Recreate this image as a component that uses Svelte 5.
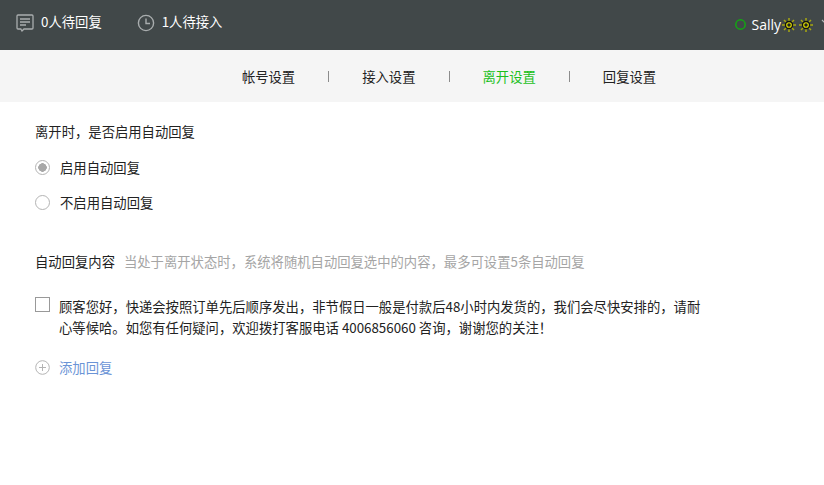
<script lang="ts">
  const tabs = ["帐号设置", "接入设置", "离开设置", "回复设置"];
  const active = "离开设置";
</script>

<div class="page">
  <header class="topbar">
    <div class="stat first">
      <svg width="18" height="18" viewBox="0 0 18 18" fill="none" stroke="#a9adae" stroke-width="1.3">
        <path d="M2 1h14a1 1 0 0 1 1 1v12a1 1 0 0 1-1 1H8l-2 2-1.200-2H2a1 1 0 0 1-1-1V2a1 1 0 0 1 1-1z" />
        <path d="M4 5h10M4 8h10M4 11h6" />
      </svg>
      <span>0人待回复</span>
    </div>
    <div class="stat">
      <svg width="18" height="18" viewBox="0 0 18 18" fill="none" stroke="#a9adae" stroke-width="1.4">
        <circle cx="9" cy="9" r="7.600" />
        <path d="M9 4.500V9.500H13" />
      </svg>
      <span>1人待接入</span>
    </div>
    <div class="user">
      <svg class="status" width="11" height="11" viewBox="0 0 11 11" fill="none" stroke="#12a812" stroke-width="1.500">
        <circle cx="5.500" cy="5.500" r="4.700" />
      </svg>
      <span class="name">Sally</span>
      {#each [0, 1] as i}
        <svg class="sun" width="14" height="14" viewBox="0 0 14 14" data-i={i}>
          <path d="M7 0v3M7 11v3M0 7h3M11 7h3M2 2l2 2M10 10l2 2M2 12l2-2M10 4l2-2" stroke="#a8a810" stroke-width="1.500" />
          <circle cx="7" cy="7" r="4.200" fill="#111" />
          <circle cx="7" cy="7" r="2.300" fill="#222" stroke="#e0e000" stroke-width="1.100" />
        </svg>
      {/each}
      <svg class="caret" width="8" height="6" viewBox="0 0 8 6" fill="none" stroke="#b5b8b9" stroke-width="1.200">
        <path d="M1 1l3 3 3-3" />
      </svg>
    </div>
  </header>

  <nav class="tabs">
    {#each tabs as tab, i}
      {#if i > 0}<span class="sep"></span>{/if}
      <span class="tab" class:active={tab === active}>{tab}</span>
    {/each}
  </nav>

  <main class="content">
    <p class="label">离开时，是否启用自动回复</p>
    <label class="radio-row">
      <span class="radio checked"></span>
      <span>启用自动回复</span>
    </label>
    <label class="radio-row">
      <span class="radio"></span>
      <span>不启用自动回复</span>
    </label>

    <div class="reply-head">
      <span class="label">自动回复内容</span>
      <span class="hint">当处于离开状态时，系统将随机自动回复选中的内容，最多可设置5条自动回复</span>
    </div>

    <div class="reply">
      <span class="check"></span>
      <p>顾客您好，快递会按照订单先后顺序发出，非节假日一般是付款后48小时内发货的，我们会尽快安排的，请耐心等候哈。如您有任何疑问，欢迎拨打客服电话 4006856060 咨询，谢谢您的关注！</p>
    </div>

    <div class="add">
      <svg width="15" height="15" viewBox="0 0 15 15" fill="none" stroke="#b4b4b4">
        <circle cx="7.500" cy="7.500" r="6.800" />
        <path d="M7.500 4v7M4 7.500h7" />
      </svg>
      <span>添加回复</span>
    </div>
  </main>
</div>

<style>
  :global(body) {
    background: #fff;
  }

  .page {
    height: 485px;
    overflow: hidden;
    font-family: "Noto Sans CJK SC", "Liberation Sans", sans-serif;
    font-size: 13.33px;
    color: #222;
  }

  .topbar {
    height: 50px;
    background: #414849;
    display: flex;
    align-items: center;
    color: #fff;
    padding-left: 16px;
  }

  .stat {
    display: flex;
    align-items: center;
    gap: 7px;
    margin-right: 35px;
    padding-bottom: 4px;
  }

  .stat span {
    margin-bottom: 4px;
  }

  .user {
    margin-left: auto;
    display: flex;
    align-items: center;
    margin-right: -5px;
  }

  .status {
    margin-right: 5px;
    margin-bottom: 1px;
  }

  .name {
    margin-right: 1px;
    margin-bottom: 2px;
    font-size: 14px;
    font-family: "Open Sans", "Liberation Sans", sans-serif;
  }

  .sun {
    margin-right: 3px;
  }

  .caret {
    margin-left: 5px;
    margin-top: -7px;
  }

  .tabs {
    height: 52px;
    background: #f5f5f5;
    display: flex;
    align-items: center;
    justify-content: center;
    gap: 33px;
    padding-left: 74px;
  }

  .sep {
    width: 1px;
    height: 11px;
    background: #8c8c8c;
  }

  .tab.active {
    color: #1cc01c;
  }

  .content {
    padding: 20px 35px 0;
  }

  p {
    margin: 0;
  }

  .label {
    line-height: 20px;
  }

  .radio-row {
    display: flex;
    align-items: center;
    gap: 10px;
    height: 20px;
    margin-top: 15px;
  }

  .radio {
    box-sizing: border-box;
    width: 15px;
    height: 15px;
    border: 1px solid #b4b4b4;
    border-radius: 50%;
    background: #fff;
  }

  .radio.checked {
    background: radial-gradient(circle, #a8a8a8 0 4px, #fff 4.500px);
  }

  .reply-head {
    display: flex;
    gap: 9px;
    margin-top: 40px;
    line-height: 20px;
  }

  .hint {
    color: #a5a5a5;
  }

  .reply {
    display: flex;
    gap: 9px;
    margin-top: 24px;
    width: 666px;
  }

  .check {
    box-sizing: border-box;
    flex: none;
    width: 15px;
    height: 15px;
    border: 1px solid #999;
    margin-top: 1px;
  }

  .reply p {
    line-height: 21px;
  }

  .add {
    display: flex;
    align-items: center;
    gap: 9px;
    margin-top: 20px;
    color: #6b94d6;
  }
</style>
